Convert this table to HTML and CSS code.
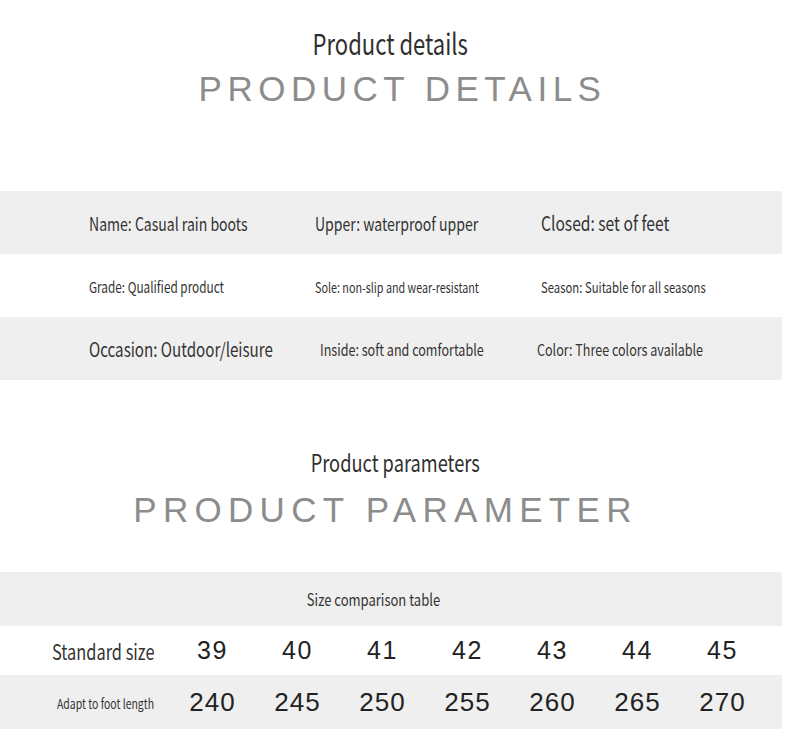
FILE: index.html
```html
<!DOCTYPE html>
<html>
<head>
<meta charset="utf-8">
<link rel="stylesheet" href="styles.css">
</head>
<body>
<div class="page">
  <section class="head head-details">
    <div class="title-sm"><span class="cn">Product details</span></div>
    <div class="title-lg t1">PRODUCT DETAILS</div>
  </section>

  <div class="details">
    <div class="drow grey">
      <div class="cell"><span class="cn f18">Name: Casual rain boots</span></div>
      <div class="cell c2"><span class="cn f18">Upper: waterproof upper</span></div>
      <div class="cell c3"><span class="cn f20">Closed: set of feet</span></div>
    </div>
    <div class="drow">
      <div class="cell"><span class="cn f15">Grade: Qualified product</span></div>
      <div class="cell c2"><span class="cn f138">Sole: non-slip and wear-resistant</span></div>
      <div class="cell c3"><span class="cn f145">Season: Suitable for all seasons</span></div>
    </div>
    <div class="drow grey">
      <div class="cell"><span class="cn f194">Occasion: Outdoor/leisure</span></div>
      <div class="cell c2i"><span class="cn f16">Inside: soft and comfortable</span></div>
      <div class="cell c3c"><span class="cn f16">Color: Three colors available</span></div>
    </div>
  </div>

  <section class="head head-params">
    <div class="title-sm"><span class="cn">Product parameters</span></div>
    <div class="title-lg t2">PRODUCT PARAMETER</div>
  </section>

  <div class="sizes">
    <div class="shead grey"><span class="cn f167">Size comparison table</span></div>
    <div class="srow r1">
      <div class="label"><span class="cn f21">Standard size</span></div>
      <div class="num">39</div><div class="num">40</div><div class="num">41</div><div class="num">42</div><div class="num">43</div><div class="num">44</div><div class="num">45</div>
    </div>
    <div class="srow r2 grey">
      <div class="label"><span class="cn f134">Adapt to foot length</span></div>
      <div class="num">240</div><div class="num">245</div><div class="num">250</div><div class="num">255</div><div class="num">260</div><div class="num">265</div><div class="num">270</div>
    </div>
  </div>
</div>
</body>
</html>
```

FILE: styles.css
```css
html, body {
  margin: 0;
  padding: 0;
  background: #ffffff;
}

.page {
  width: 790px;
  height: 745px;
  overflow: hidden;
  display: flex;
  flex-direction: column;
  font-family: "Noto Sans CJK SC", "Noto Sans", sans-serif;
  color: #333333;
}

.cn {
  display: inline-block;
  font-family: "Noto Sans CJK SC", "Noto Sans", sans-serif;
  transform: scaleX(0.78);
  transform-origin: left center;
  white-space: nowrap;
}

.grey {
  background: #efefef;
}

/* headings */
.head {
  display: flex;
  flex-direction: column;
  align-items: center;
}

.head-details {
  padding-top: 22px;
  height: 191px;
  box-sizing: border-box;
}

.head-params {
  margin-top: 68px;
  height: 124px;
  box-sizing: border-box;
}

.title-sm {
  font-size: 29px;
  line-height: 40px;
  height: 40px;
  color: #2f2f2f;
  width: 100%;
  text-align: center;
  padding-right: 9px;
  box-sizing: border-box;
}

.title-sm .cn {
  transform-origin: center center;
  transform: scaleX(0.76);
}

.head-params .title-sm {
  font-size: 24px;
  line-height: 28px;
  padding-right: 0;
  padding-left: 0;
}

.title-lg {
  font-family: "Liberation Sans", Arial, sans-serif;
  font-size: 35px;
  line-height: 44px;
  color: #8c8c8c;
  white-space: nowrap;
}

.t1 {
  letter-spacing: 5.5px;
  margin-left: 15px;
  margin-top: 5px;
}

.t2 {
  letter-spacing: 6.3px;
  margin-left: -19px;
}

/* details table */
.details {
  width: 782px;
  display: flex;
  flex-direction: column;
}

.drow {
  height: 63px;
  display: grid;
  grid-template-columns: 223px 223px 1fr;
  padding-left: 89px;
  align-items: center;
}

.cell {
  white-space: nowrap;
}

.c2 { padding-left: 3px; }
.c3 { padding-left: 6px; }
.c2i { padding-left: 8px; }
.c3c { padding-left: 2px; }

.f134 { font-size: 13.4px; }
.f138 { font-size: 13.8px; }
.f145 { font-size: 14.5px; }
.f15 { font-size: 15.1px; }
.f16 { font-size: 16.1px; }
.f167 { font-size: 16.7px; }
.f18 { font-size: 18px; }
.f194 { font-size: 19.4px; }
.f20 { font-size: 20px; }
.f21 { font-size: 21px; }

/* size table */
.sizes {
  width: 782px;
  display: flex;
  flex-direction: column;
}

.shead {
  height: 54px;
  display: flex;
  align-items: center;
  justify-content: center;
  padding-right: 36px;
}

.shead .cn {
  transform-origin: center center;
}

.srow {
  display: grid;
  grid-template-columns: 170px repeat(7, 85px);
  align-items: center;
}

.r1 { height: 49px; }
.r2 { height: 54px; }

.label {
  padding-left: 52px;
  white-space: nowrap;
}

.r2 .label { padding-left: 57px; }

.num {
  text-align: center;
  font-family: "Liberation Sans", Arial, sans-serif;
  color: #222222;
}

.r1 .num { font-size: 25px; letter-spacing: 1.5px; }
.r2 .num { font-size: 26px; letter-spacing: 1px; }
```
